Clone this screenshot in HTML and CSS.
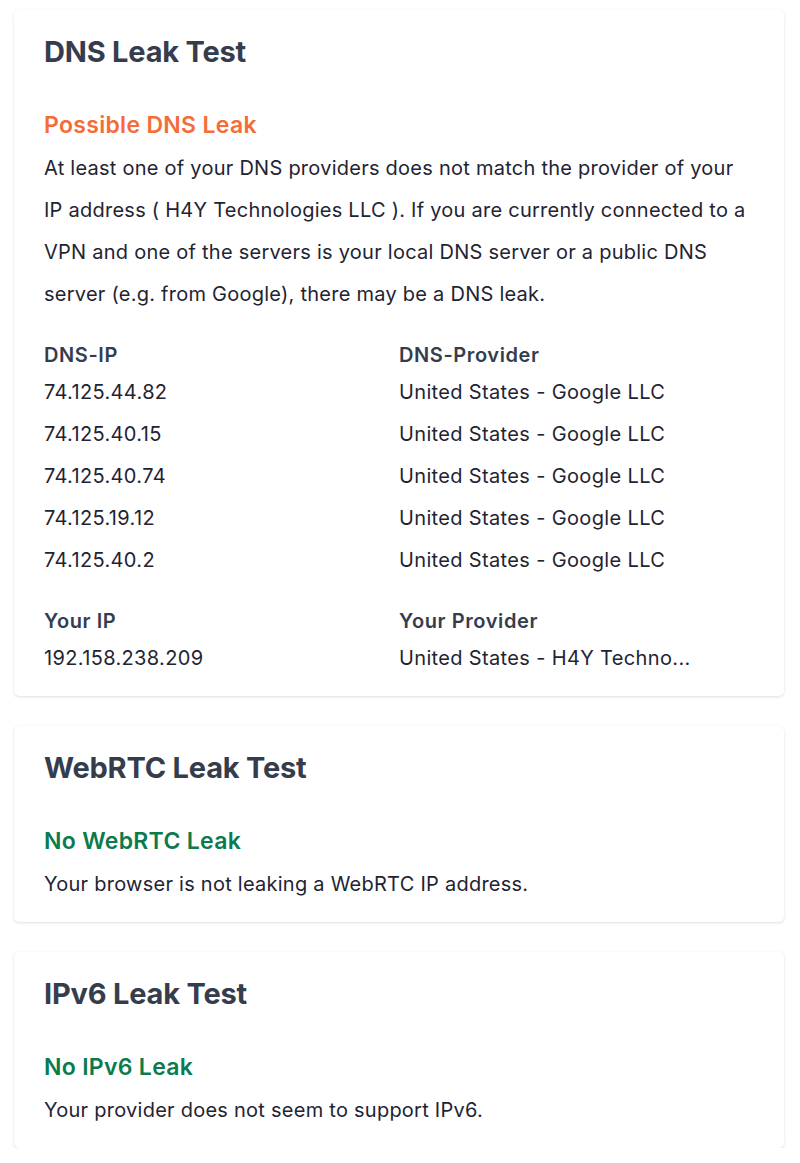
FILE: index.html
```html
<!DOCTYPE html>
<html lang="en">
<head>
<meta charset="utf-8">
<title>Leak Tests</title>
<link rel="stylesheet" href="styles.css">
</head>
<body>
<main class="page">
  <section class="card">
    <h2 class="card-title">DNS Leak Test</h2>
    <h3 class="status status-warn">Possible DNS Leak</h3>
    <p class="text">At least one of your DNS providers does not match the provider of your IP address ( H4Y Technologies LLC ). If you are currently connected to a VPN and one of the servers is your local DNS server or a public DNS server (e.g. from Google), there may be a DNS leak.</p>
    <div class="table">
      <div class="th">DNS-IP</div><div class="th">DNS-Provider</div>
      <div class="td">74.125.44.82</div><div class="td">United States - Google LLC</div>
      <div class="td">74.125.40.15</div><div class="td">United States - Google LLC</div>
      <div class="td">74.125.40.74</div><div class="td">United States - Google LLC</div>
      <div class="td">74.125.19.12</div><div class="td">United States - Google LLC</div>
      <div class="td">74.125.40.2</div><div class="td">United States - Google LLC</div>
    </div>
    <div class="table table-own">
      <div class="th">Your IP</div><div class="th">Your Provider</div>
      <div class="td">192.158.238.209</div><div class="td">United States - H4Y Techno...</div>
    </div>
  </section>
  <section class="card">
    <h2 class="card-title">WebRTC Leak Test</h2>
    <h3 class="status status-ok">No WebRTC Leak</h3>
    <p class="text">Your browser is not leaking a WebRTC IP address.</p>
  </section>
  <section class="card">
    <h2 class="card-title">IPv6 Leak Test</h2>
    <h3 class="status status-ok">No IPv6 Leak</h3>
    <p class="text">Your provider does not seem to support IPv6.</p>
  </section>
</main>
</body>
</html>
```
FILE: styles.css
```css
* { box-sizing: border-box; }
html, body { margin: 0; padding: 0; background: #ffffff; }
body {
  font-family: Inter, "Noto Sans", "Liberation Sans", sans-serif;
  color: #1f2433;
}
.page {
  display: flex;
  flex-direction: column;
  gap: 30px;
  padding: 10px 16px 0 14px;
}
.card {
  background: #fff;
  border-radius: 5px;
  box-shadow: 0 1px 3px rgba(0,0,0,0.12), 0 0 1px rgba(0,0,0,0.06);
  padding: 24px 30px 17px 30px;
}
.card-title {
  margin: 0;
  font-size: 29px;
  line-height: 36px;
  font-weight: 700;
  color: #353d4d;
  letter-spacing: -0.2px;
}
.status {
  margin: 40px 0 7px;
  font-size: 23px;
  line-height: 30px;
  font-weight: 600;
  letter-spacing: 0.3px;
}
.status-warn { color: #f56c38; }
.status-ok { color: #0b7a4f; }
.text {
  margin: 0;
  font-size: 20px;
  line-height: 42px;
  letter-spacing: 0.25px;
  color: #1f2433;
}
.table {
  display: grid;
  grid-template-columns: 1fr 1fr;
  margin-top: 24px;
}
.th {
  font-size: 20px;
  font-weight: 600;
  line-height: 32px;
  letter-spacing: 0.6px;
  color: #353d4d;
}
.td {
  font-size: 20px;
  line-height: 42px;
  letter-spacing: 0.35px;
  color: #1f2433;
  white-space: nowrap;
}
```
